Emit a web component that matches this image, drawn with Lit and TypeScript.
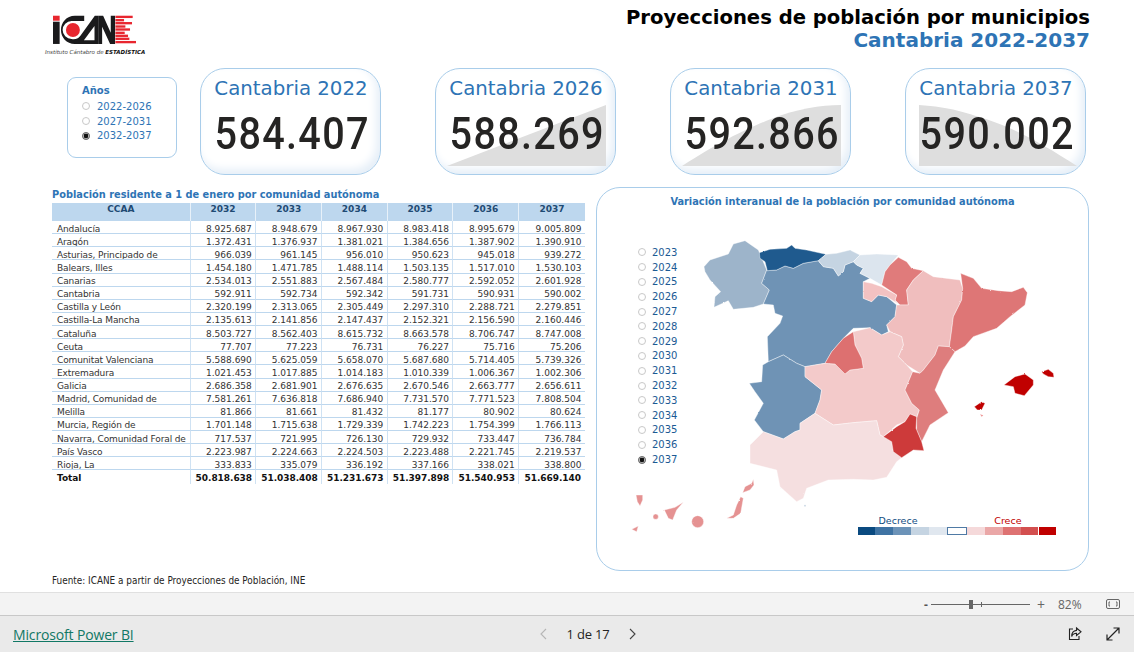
import { LitElement, html, css, svg } from "lit";
import { customElement } from "lit/decorators.js";

const rows: string[][] = [
  ["Andalucía","8.925.687","8.948.679","8.967.930","8.983.418","8.995.679","9.005.809"],
  ["Aragón","1.372.431","1.376.937","1.381.021","1.384.656","1.387.902","1.390.910"],
  ["Asturias, Principado de","966.039","961.145","956.010","950.623","945.018","939.272"],
  ["Balears, Illes","1.454.180","1.471.785","1.488.114","1.503.135","1.517.010","1.530.103"],
  ["Canarias","2.534.013","2.551.883","2.567.484","2.580.777","2.592.052","2.601.928"],
  ["Cantabria","592.911","592.734","592.342","591.731","590.931","590.002"],
  ["Castilla y León","2.320.199","2.313.065","2.305.449","2.297.310","2.288.721","2.279.851"],
  ["Castilla-La Mancha","2.135.613","2.141.856","2.147.437","2.152.321","2.156.590","2.160.446"],
  ["Cataluña","8.503.727","8.562.403","8.615.732","8.663.578","8.706.747","8.747.008"],
  ["Ceuta","77.707","77.223","76.731","76.227","75.716","75.206"],
  ["Comunitat Valenciana","5.588.690","5.625.059","5.658.070","5.687.680","5.714.405","5.739.326"],
  ["Extremadura","1.021.453","1.017.885","1.014.183","1.010.339","1.006.367","1.002.306"],
  ["Galicia","2.686.358","2.681.901","2.676.635","2.670.546","2.663.777","2.656.611"],
  ["Madrid, Comunidad de","7.581.261","7.636.818","7.686.940","7.731.570","7.771.523","7.808.504"],
  ["Melilla","81.866","81.661","81.432","81.177","80.902","80.624"],
  ["Murcia, Región de","1.701.148","1.715.638","1.729.339","1.742.223","1.754.399","1.766.113"],
  ["Navarra, Comunidad Foral de","717.537","721.995","726.130","729.932","733.447","736.784"],
  ["País Vasco","2.223.987","2.224.663","2.224.503","2.223.488","2.221.745","2.219.537"],
  ["Rioja, La","333.833","335.079","336.192","337.166","338.021","338.800"],
];
const total = ["Total","50.818.638","51.038.408","51.231.673","51.397.898","51.540.953","51.669.140"];

const kpis = [
  { title: "Cantabria 2022", value: "584.407", area: "" },
  { title: "Cantabria 2026", value: "588.269", area: "M11 97 L170 36 L170 97 Z" },
  { title: "Cantabria 2031", value: "592.866", area: "M11 97 C50 72 75 60 100 50 C125 40 150 36 170 36 L170 97 Z" },
  { title: "Cantabria 2037", value: "590.002", area: "M13 36 C45 38 60 44 80 50 C110 60 135 74 171 97 L13 97 Z" },
];

const regions: [string, string][] = [
  ["#9db4ca", "42,110 60,90 115,72 130,42 165,32 205,60 230,120 215,160 238,180 220,222 190,232 130,238 115,212 72,232 75,200 92,185 60,150 45,125"],
  ["#6f93b5", "232,122 260,120 285,108 310,115 340,100 385,92 400,110 430,115 445,138 460,125 465,105 490,95 500,105 520,115 510,130 540,145 520,155 520,205 545,215 565,195 590,200 620,225 615,260 590,285 595,305 575,315 540,293 490,295 460,325 425,365 405,400 345,410 320,400 280,375 235,395 232,320 270,280 278,258 255,250 250,225 220,222 238,180 215,160 230,120"],
  ["#1f5a8e", "208,68 240,58 290,55 305,45 315,55 350,60 408,73 385,92 340,100 310,115 285,108 260,120 232,122 225,95 210,85"],
  ["#c5d4e2", "385,92 408,73 440,70 480,60 510,75 490,95 465,105 460,125 445,138 430,115 400,110"],
  ["#dce5ee", "490,95 510,75 560,72 625,75 600,105 585,125 575,165 540,145 510,130 520,115 500,105"],
  ["#e07b7b", "625,82 650,95 665,115 700,122 670,150 650,180 655,225 630,225 615,210 620,195 575,165 585,125 600,105"],
  ["#f3c2c2", "520,155 545,160 575,170 620,195 615,212 625,222 590,200 565,195 545,215 520,205"],
  ["#f0bebe", "700,122 730,140 810,150 818,175 815,210 790,260 785,300 778,350 745,348 735,375 700,420 690,430 650,405 625,380 640,345 635,320 600,305 590,285 615,260 620,225 655,225 650,180 670,150"],
  ["#de7676", "812,130 850,145 875,175 925,182 965,185 1000,172 1012,188 1005,225 960,260 920,295 850,320 825,348 795,365 778,350 785,300 790,260 815,210 818,175"],
  ["#6f93b5", "235,395 280,375 320,400 345,410 345,440 395,480 390,510 375,550 330,580 330,600 315,605 280,627 220,605 193,570 220,520 195,485 178,460 215,455 218,405"],
  ["#f3caca", "345,410 405,400 435,402 465,432 480,420 520,415 515,385 495,345 490,305 540,293 575,315 600,305 635,320 640,345 625,380 650,405 668,425 645,480 665,520 688,540 680,560 660,552 645,575 620,585 580,620 570,615 560,572 490,578 430,585 375,550 390,510 395,480 345,440"],
  ["#dd7070", "490,305 495,345 515,385 520,415 480,420 465,432 435,402 405,400 425,365 460,325"],
  ["#de7d7d", "745,348 778,350 795,365 760,420 735,480 775,548 720,585 695,635 680,600 680,565 688,540 665,520 645,480 668,425 690,430 700,420 735,375"],
  ["#f5dfe0", "375,550 330,580 330,600 315,605 280,627 220,605 180,645 180,700 260,720 270,770 320,815 340,805 350,775 415,750 490,748 550,750 590,742 620,695 635,683 610,665 605,635 580,620 570,615 560,572 490,578 430,585"],
  ["#cd3a3a", "660,552 680,560 678,595 695,635 702,662 670,660 635,683 610,665 605,635 580,620 620,590 645,575"],
  ["#c00000", "942,465 975,440 1005,432 1030,450 1030,465 1003,497 975,490 970,470"],
  ["#c00000", "1055,425 1075,418 1090,430 1092,442 1075,440 1060,432"],
  ["#c00000", "853,530 875,515 885,520 875,540 862,540"],
  ["#e59292", "-175,898 -155,888 -160,905"],
  ["#e59292", "-162,795 -142,795 -142,810 -150,828 -158,815"],
  ["#e59292", "-77,840 -45,832 -20,817 -40,840 -52,870 -65,865"],
  ["#e59292", "110,865 130,855 140,825 152,800 160,805 152,850 130,865"],
  ["#e59292", "158,788 165,770 185,760 190,748 192,765 180,780"],
];

@customElement("app-root")
export class AppRoot extends LitElement {
  static styles = css`
    :host { display: block; width: 1134px; height: 652px; overflow: hidden; background: #fff; font-family: "DejaVu Sans", Verdana, sans-serif; color: #252423; }
    .report { height: 592px; box-sizing: border-box; display: flex; flex-direction: column; }
    .head { height: 68px; display: flex; justify-content: space-between; padding: 0 44px 0 45px; }
    .brand { display: flex; flex-direction: column; padding-top: 15px; }
    .brand svg { display: block; margin-left: 8px; }
    .brand span { font-size: 5.5px; line-height: 8px; font-style: italic; color: #444; white-space: nowrap; margin-top: 3px; }
    .brand b { color: #111; }
    .titles { text-align: right; padding-top: 6px; }
    .t1 { font-size: 19.6px; line-height: 23px; font-weight: 700; color: #000; }
    .t2 { font-size: 20px; line-height: 23px; font-weight: 700; color: #2e74b5; }
    .kpirow { display: flex; padding-left: 67px; height: 107px; }
    .slicer { box-sizing: border-box; width: 110px; height: 81px; margin: 9px 23px 0 0; border: 1px solid #a9cdea; border-radius: 9px; padding: 6px 0 0 14px; }
    .slicer h4 { margin: 0 0 1px; font-size: 10px; line-height: 14px; font-weight: 700; color: #2e74b5; }
    .radio { display: flex; align-items: center; height: 14.7px; font-size: 10px; color: #2e74b5; gap: 8px; }
    .slicer .radio { gap: 7px; }
    .dot { box-sizing: border-box; width: 8px; height: 8px; border-radius: 50%; border: 1px solid #c8c8c8; background: #fff; flex: none; }
    .dot.on { border-color: #777; background: #111; box-shadow: inset 0 0 0 0.6px #fff; }
    .cards { display: flex; gap: 54px; }
    .card { position: relative; box-sizing: border-box; width: 181px; height: 107px; border: 1px solid #a9cdea; border-radius: 25px; background: #fff; box-shadow: inset -4px -5px 9px #e6eff8; overflow: hidden; text-align: center; }
    .card svg { position: absolute; left: 0; top: 0; }
    .ct { position: relative; font-size: 19.8px; line-height: 26px; margin: 7px 0 0 1px; color: #2e74b5; white-space: nowrap; }
    .cv { position: relative; font-family: Roboto, sans-serif; font-weight: 500; font-size: 45px; line-height: 50px; margin: 7px 0 0 3px; letter-spacing: 1.5px; color: #252423; white-space: nowrap; transform: scaleX(0.88); }
    .lower { display: flex; padding-left: 52px; margin-top: 12px; height: 384px; }
    .left { width: 533px; margin-right: 11px; }
    .left h3 { margin: 0; font-size: 9.8px; line-height: 16px; font-weight: 700; color: #2e74b5; white-space: nowrap; }
    .grid { display: grid; grid-template-columns: 138.6px repeat(6, 65.73px); grid-template-rows: 18px; grid-auto-rows: 13.13px; font-size: 9px; line-height: 12px; color: #333; }
    .grid > div { box-sizing: border-box; border-bottom: 1px solid #bdd7ee; border-right: 1px solid #cfe2f3; padding: 1.5px 3.5px 0 5px; text-align: right; white-space: nowrap; overflow: hidden; }
    .grid > div.n { text-align: left; letter-spacing: -0.12px; }
    .grid > div.th { height: 18px; background: #bdd7ee; border-bottom: 0; border-right: 1px solid #e8f1f9; font-weight: 700; color: #1f4a73; text-align: center; padding: 0; }
    .grid > div.tot { font-weight: 700; color: #111; border-bottom: 0; font-size: 9px; padding-right: 4px; letter-spacing: -0.05px; }
    .grid > div.last { border-right: 0; }
    .mapcard { position: relative; box-sizing: border-box; width: 493px; height: 384px; border: 1px solid #a9cdea; border-radius: 24px; display: flex; flex-direction: column; overflow: hidden; }
    .mapcard > svg { position: absolute; left: 0; top: 0; }
    .mapcard h3 { position: relative; margin: 7px 0 0; text-align: center; font-size: 9.8px; line-height: 13px; font-weight: 700; color: #2e74b5; }
    .years { position: relative; margin: 37px 0 0 41px; width: 60px; }
    .years .radio { height: 14.8px; gap: 6px; color: #1b5a94; }
    .legend { position: relative; align-self: flex-end; margin: 47px 31.5px 0 0; width: 199px; }
    .lt { display: flex; justify-content: space-between; padding: 0 35px 0 21px; font-size: 9.5px; line-height: 13px; }
    .lt span { color: #0f4c81; }
    .lt span + span { color: #c00000; }
    .sw { display: flex; height: 8px; gap: 0.4px; }
    .sw i { flex: 1; box-sizing: border-box; }
    .source { margin: 4px 0 0 52px; font-size: 9.9px; line-height: 12px; font-stretch: condensed; color: #252423; }
    .zoombar { height: 24px; box-sizing: border-box; background: #f3f3f3; border-top: 1px solid #e0e0e0; border-bottom: 1px solid #c8c8c8; display: flex; align-items: center; justify-content: flex-end; padding-right: 14px; color: #666; font-family: "Open Sans", sans-serif; font-size: 12px; }
    .minus { font-weight: 700; width: 7px; color: #555; }
    .slider { position: relative; width: 99px; height: 1px; background: #666; margin: 0 7px 0 0; }
    .slider i { position: absolute; left: 38px; top: -4px; width: 4px; height: 9px; background: #666; }
    .slider u { position: absolute; left: 50px; top: -2px; width: 1px; height: 5px; background: #666; }
    .plus { width: 21px; font-size: 14px; }
    .pct { width: 48px; }
    .footer { height: 36px; background: #eaeaea; display: flex; align-items: center; font-family: "Open Sans", sans-serif; }
    .footer .link { margin-left: 13px; font-size: 14px; letter-spacing: -0.15px; color: #117865; text-decoration: underline; width: 525px; white-space: nowrap; }
    .pager { display: flex; align-items: center; width: 529px; font-size: 13px; letter-spacing: -0.2px; color: #252423; }
    .pager span { width: 80px; text-align: center; white-space: nowrap; }
    .actions { display: flex; gap: 22px; align-items: center; }
  `;

  private logo() {
    const stripes = [[47,52],[57,26],[66,50],[76,30],[85,44],[95,28],[104,38],[113,42],[123,62]];
    return html`<svg width="83" height="30" viewBox="158 47 250 86">
      <rect x="158" y="47" width="20" height="15" fill="#e8262f"/>
      <rect x="158" y="65" width="20" height="67" fill="#1a1a1c"/>
      <path d="M252 47H224C198 47 182 68 182 90C182 112 198 132 224 132H296V47H284L240 108A27 27 0 0 1 214 117A27 27 0 0 1 214 63H252Z" fill="#1a1a1c"/>
      <polygon points="251,121 283,121 283,78" fill="#fff"/>
      <circle cx="218" cy="90" r="21" fill="#e8262f"/>
      <polygon points="296,47 309,47 332,98 332,47 345,47 345,132 330,132 306,80 306,132 296,132" fill="#1a1a1c"/>
      ${stripes.map(([y, w]) => svg`<rect x="346" y=${y} width=${w} height="7" fill="#e8262f"/>`)}
    </svg><span>Instituto Cántabro de <b>ESTADÍSTICA</b></span>`;
  }

  private map() {
    return html`<svg width="491" height="382" viewBox="597 188 491 382">
      <defs><filter id="rough" x="-5%" y="-5%" width="110%" height="110%" color-interpolation-filters="sRGB">
        <feTurbulence type="fractalNoise" baseFrequency="0.3" numOctaves="2" seed="4"/>
        <feDisplacementMap in="SourceGraphic" scale="5" xChannelSelector="R" yChannelSelector="G"/>
      </filter></defs>
      <g transform="translate(690 230) scale(.33333)">
        <g filter="url(#rough)" stroke="#fff" stroke-opacity=".75" stroke-width="1.6" stroke-linejoin="round">
          ${regions.map(([c, p]) => svg`<polygon fill=${c} points=${p}/>`)}
          <circle cx="-103" cy="860" r="8" fill="#e59292"/>
          <circle cx="23" cy="875" r="18" fill="#e59292"/>
        </g>
        <polygon points="870,553 880,556 875,560" fill="#e99"/>
        <circle cx="345" cy="827" r="2.5" fill="#c5d4e2"/>
      </g>
    </svg>`;
  }

  private icons() {
    return html`
      <svg width="16" height="16" viewBox="0 0 16 16" fill="none" stroke="#222" stroke-width="1.1"><path d="M6 3H2.5V13.5H12V10"/><path d="M9.5 2L14 5.8L9.5 9.5V7.3C7 7.3 5.5 8.5 4.7 10.5C4.7 7 6.7 4.7 9.5 4.4Z"/></svg>
      <svg width="16" height="16" viewBox="0 0 16 16" fill="none" stroke="#222" stroke-width="1.2"><path d="M2 14L14 2M8.5 2H14V7.5M2 8.5V14H7.5"/></svg>`;
  }

  render() {
    const swatches = ["#0a4a80","#3f73a3","#6c93b8","#c5d4e2","#e0e7ef","","#f5d9da","#eaa7a7","#de7272","#d34f4f","#c00000"];
    const years = Array.from({ length: 15 }, (_, i) => 2023 + i);
    const head = ["CCAA","2032","2033","2034","2035","2036","2037"];
    return html`
      <div class="report">
        <div class="head">
          <div class="brand">${this.logo()}</div>
          <div class="titles">
            <div class="t1">Proyecciones de población por municipios</div>
            <div class="t2">Cantabria 2022-2037</div>
          </div>
        </div>
        <div class="kpirow">
          <div class="slicer">
            <h4>Años</h4>
            ${["2022-2026","2027-2031","2032-2037"].map((t, i) => html`<div class="radio"><span class="dot ${i === 2 ? "on" : ""}"></span>${t}</div>`)}
          </div>
          <div class="cards">
            ${kpis.map(k => html`<div class="card">
              ${k.area ? svg`<svg width="179" height="105"><path d=${k.area} fill="#dedede"/></svg>` : ""}
              <div class="ct">${k.title}</div>
              <div class="cv">${k.value}</div>
            </div>`)}
          </div>
        </div>
        <div class="lower">
          <div class="left">
            <h3>Población residente a 1 de enero por comunidad autónoma</h3>
            <div class="grid">
              ${head.map((h, i) => html`<div class="th ${i === 6 ? "last" : ""}">${h}</div>`)}
              ${rows.map(r => r.map((c, i) => html`<div class="${i === 0 ? "n" : ""} ${i === 6 ? "last" : ""}">${c}</div>`))}
              ${total.map((c, i) => html`<div class="tot ${i === 0 ? "n" : ""} ${i === 6 ? "last" : ""}">${c}</div>`)}
            </div>
          </div>
          <div class="mapcard">
            ${this.map()}
            <h3>Variación interanual de la población por comunidad autónoma</h3>
            <div class="years">
              ${years.map(y => html`<div class="radio"><span class="dot ${y === 2037 ? "on" : ""}"></span>${y}</div>`)}
            </div>
            <div class="legend">
              <div class="lt"><span>Decrece</span><span>Crece</span></div>
              <div class="sw">${swatches.map(c => c ? html`<i style="background:${c}"></i>` : html`<i style="border:1px solid #4f7aa5"></i>`)}</div>
            </div>
          </div>
        </div>
        <div class="source">Fuente: ICANE a partir de Proyecciones de Población, INE</div>
      </div>
      <div class="zoombar">
        <span class="minus">-</span>
        <div class="slider"><i></i><u></u></div>
        <span class="plus">+</span>
        <span class="pct">82%</span>
        <svg width="14" height="10" viewBox="0 0 14 10" fill="none" stroke="#666"><rect x=".5" y=".5" width="13" height="9" rx="1.5"/><path d="M4 3H3V7H4M10 3H11V7H10"/></svg>
      </div>
      <div class="footer">
        <span class="link">Microsoft Power BI</span>
        <div class="pager">
          <svg width="10" height="14" viewBox="0 0 10 14" fill="none" stroke="#b5b5b5" stroke-width="1.1"><path d="M8 2L3 7L8 12"/></svg>
          <span>1 de 17</span>
          <svg width="10" height="14" viewBox="0 0 10 14" fill="none" stroke="#444" stroke-width="1.1"><path d="M2 2L7 7L2 12"/></svg>
        </div>
        <div class="actions">${this.icons()}</div>
      </div>
    `;
  }
}
